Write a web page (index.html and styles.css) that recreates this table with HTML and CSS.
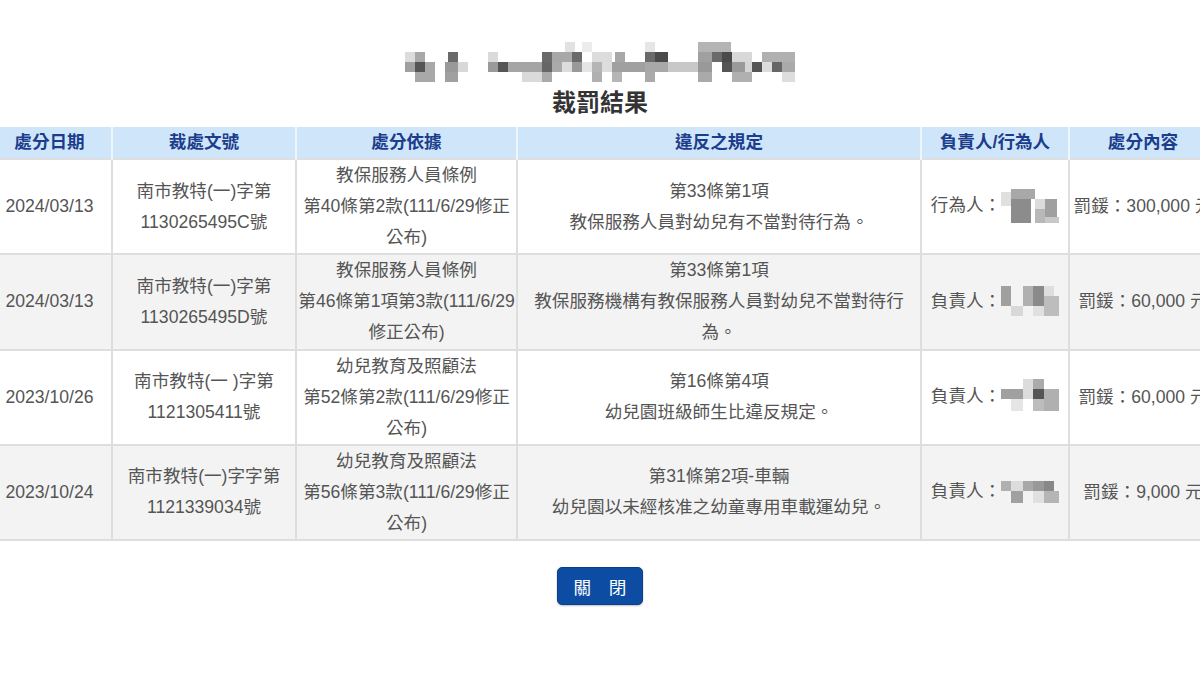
FILE: index.html
```html
<!DOCTYPE html>
<html lang="zh-Hant">
<head>
<meta charset="utf-8">
<title>裁罰結果</title>
<link rel="stylesheet" href="styles.css">
</head>
<body>
<div class="page">
  <header class="head">
    <svg class="blur-title" width="390" height="40" viewBox="0 0 390 40" aria-hidden="true">
      <rect x="160" y="0" width="10" height="10" fill="#e2e2e2"/>
      <rect x="177" y="0" width="10" height="10" fill="#ececec"/>
      <rect x="240" y="0" width="10" height="10" fill="#e6e6e6"/>
      <rect x="293" y="0" width="33" height="10" fill="#b4b4b4"/>
      <rect x="0" y="10" width="10" height="10" fill="#dcdcdc"/>
      <rect x="10" y="10" width="10" height="10" fill="#a8a8a8"/>
      <rect x="43" y="10" width="10" height="10" fill="#6a6a6a"/>
      <rect x="83" y="10" width="10" height="10" fill="#dadada"/>
      <rect x="137" y="10" width="10" height="10" fill="#6a6a6a"/>
      <rect x="147" y="10" width="20" height="10" fill="#a8a8a8"/>
      <rect x="167" y="10" width="10" height="10" fill="#6a6a6a"/>
      <rect x="187" y="10" width="20" height="10" fill="#dcdcdc"/>
      <rect x="210" y="10" width="10" height="10" fill="#a8a8a8"/>
      <rect x="240" y="10" width="10" height="10" fill="#6a6a6a"/>
      <rect x="250" y="10" width="13" height="10" fill="#4a4a4a"/>
      <rect x="293" y="10" width="14" height="10" fill="#a0a0a0"/>
      <rect x="307" y="10" width="10" height="10" fill="#6a6a6a"/>
      <rect x="317" y="10" width="10" height="10" fill="#4a4a4a"/>
      <rect x="327" y="10" width="20" height="10" fill="#d8d8d8"/>
      <rect x="357" y="10" width="33" height="10" fill="#b0b0b0"/>
      <rect x="0" y="20" width="10" height="10" fill="#a0a0a0"/>
      <rect x="10" y="20" width="10" height="10" fill="#555"/>
      <rect x="20" y="20" width="10" height="10" fill="#a8a8a8"/>
      <rect x="40" y="20" width="13" height="10" fill="#999"/>
      <rect x="53" y="20" width="10" height="10" fill="#d8d8d8"/>
      <rect x="83" y="20" width="10" height="10" fill="#9a9a9a"/>
      <rect x="93" y="20" width="10" height="10" fill="#555"/>
      <rect x="103" y="20" width="34" height="10" fill="#a5a5a5"/>
      <rect x="137" y="20" width="10" height="10" fill="#666"/>
      <rect x="147" y="20" width="10" height="10" fill="#aaa"/>
      <rect x="157" y="20" width="10" height="10" fill="#ddd"/>
      <rect x="167" y="20" width="10" height="10" fill="#999"/>
      <rect x="177" y="20" width="10" height="10" fill="#e5e5e5"/>
      <rect x="187" y="20" width="10" height="10" fill="#b5b5b5"/>
      <rect x="197" y="20" width="10" height="10" fill="#ddd"/>
      <rect x="207" y="20" width="33" height="10" fill="#a0a0a0"/>
      <rect x="240" y="20" width="23" height="10" fill="#a8a8a8"/>
      <rect x="263" y="20" width="30" height="10" fill="#c8c8c8"/>
      <rect x="293" y="20" width="14" height="10" fill="#999"/>
      <rect x="317" y="20" width="10" height="10" fill="#555"/>
      <rect x="327" y="20" width="13" height="10" fill="#9a9a9a"/>
      <rect x="340" y="20" width="7" height="10" fill="#d5d5d5"/>
      <rect x="347" y="20" width="10" height="10" fill="#555"/>
      <rect x="357" y="20" width="10" height="10" fill="#ddd"/>
      <rect x="367" y="20" width="10" height="10" fill="#666"/>
      <rect x="377" y="20" width="13" height="10" fill="#aaa"/>
      <rect x="10" y="30" width="20" height="10" fill="#a8a8a8"/>
      <rect x="40" y="30" width="13" height="10" fill="#a0a0a0"/>
      <rect x="117" y="30" width="20" height="10" fill="#dadada"/>
      <rect x="137" y="30" width="10" height="10" fill="#aaa"/>
      <rect x="187" y="30" width="10" height="10" fill="#b0b0b0"/>
      <rect x="207" y="30" width="10" height="10" fill="#b5b5b5"/>
      <rect x="240" y="30" width="10" height="10" fill="#aaa"/>
      <rect x="293" y="30" width="14" height="10" fill="#aaa"/>
      <rect x="327" y="30" width="20" height="10" fill="#b0b0b0"/>
      <rect x="377" y="30" width="13" height="10" fill="#ddd"/>
    </svg>
    <h1 class="title">裁罰結果</h1>
  </header>

  <table class="result">
    <colgroup>
      <col class="c-date">
      <col class="c-doc">
      <col class="c-basis">
      <col class="c-rule">
      <col class="c-person">
      <col class="c-penalty">
    </colgroup>
    <thead>
      <tr>
        <th>處分日期</th>
        <th>裁處文號</th>
        <th>處分依據</th>
        <th>違反之規定</th>
        <th>負責人/行為人</th>
        <th>處分內容</th>
      </tr>
    </thead>
    <tbody>
      <tr class="odd">
        <td>2024/03/13</td>
        <td>南市教特(一)字第<br>1130265495C號</td>
        <td>教保服務人員條例<br>第40條第2款(111/6/29修正<br>公布)</td>
        <td>第33條第1項<br>教保服務人員對幼兒有不當對待行為。</td>
        <td>行為人：<svg class="blur-name" width="58" height="34" viewBox="0 0 58 34" aria-hidden="true"><rect x="0" y="3" width="10" height="14" fill="#e0e0e0"/><rect x="10" y="0" width="24" height="10" fill="#a8a8a8"/><rect x="10" y="10" width="20" height="24" fill="#8c8c8c"/><rect x="34" y="10" width="10" height="10" fill="#dcdcdc"/><rect x="44" y="10" width="12" height="24" fill="#a0a0a0"/><rect x="34" y="20" width="10" height="14" fill="#b8b8b8"/><rect x="44" y="28" width="14" height="6" fill="#c8c8c8"/></svg></td>
        <td>罰鍰：300,000 元</td>
      </tr>
      <tr class="even">
        <td>2024/03/13</td>
        <td>南市教特(一)字第<br>1130265495D號</td>
        <td>教保服務人員條例<br>第46條第1項第3款(111/6/29<br>修正公布)</td>
        <td>第33條第1項<br>教保服務機構有教保服務人員對幼兒不當對待行<br>為。</td>
        <td>負責人：<svg class="blur-name" width="58" height="34" viewBox="0 0 58 34" aria-hidden="true"><rect x="0" y="2" width="10" height="20" fill="#a0a0a0"/><rect x="10" y="22" width="12" height="10" fill="#d8d8d8"/><rect x="22" y="2" width="10" height="20" fill="#b0b0b0"/><rect x="32" y="2" width="11" height="20" fill="#8a8a8a"/><rect x="43" y="2" width="10" height="10" fill="#dedede"/><rect x="43" y="12" width="15" height="20" fill="#bdbdbd"/><rect x="32" y="22" width="11" height="10" fill="#e0e0e0"/></svg></td>
        <td>罰鍰：60,000 元</td>
      </tr>
      <tr class="odd">
        <td>2023/10/26</td>
        <td>南市教特(一 )字第<br>1121305411號</td>
        <td>幼兒教育及照顧法<br>第52條第2款(111/6/29修正<br>公布)</td>
        <td>第16條第4項<br>幼兒園班級師生比違反規定。</td>
        <td>負責人：<svg class="blur-name" width="58" height="34" viewBox="0 0 58 34" aria-hidden="true"><rect x="0" y="10" width="22" height="10" fill="#a0a0a0"/><rect x="22" y="0" width="10" height="20" fill="#dcdcdc"/><rect x="32" y="0" width="11" height="10" fill="#ababab"/><rect x="32" y="10" width="11" height="10" fill="#555"/><rect x="43" y="10" width="15" height="22" fill="#b0b0b0"/><rect x="32" y="20" width="11" height="12" fill="#bdbdbd"/><rect x="10" y="20" width="12" height="12" fill="#e5e5e5"/></svg></td>
        <td>罰鍰：60,000 元</td>
      </tr>
      <tr class="even">
        <td>2023/10/24</td>
        <td>南市教特(一)字字第<br>1121339034號</td>
        <td>幼兒教育及照顧法<br>第56條第3款(111/6/29修正<br>公布)</td>
        <td>第31條第2項-車輛<br>幼兒園以未經核准之幼童專用車載運幼兒。</td>
        <td>負責人：<svg class="blur-name" width="58" height="34" viewBox="0 0 58 34" aria-hidden="true"><rect x="0" y="6" width="10" height="10" fill="#b0b0b0"/><rect x="10" y="6" width="12" height="10" fill="#dcdcdc"/><rect x="10" y="16" width="12" height="12" fill="#a0a0a0"/><rect x="22" y="6" width="10" height="10" fill="#a8a8a8"/><rect x="32" y="6" width="11" height="10" fill="#999"/><rect x="43" y="6" width="10" height="10" fill="#888"/><rect x="43" y="16" width="15" height="12" fill="#b5b5b5"/><rect x="32" y="16" width="11" height="12" fill="#e0e0e0"/></svg></td>
        <td>罰鍰：9,000 元</td>
      </tr>
    </tbody>
  </table>

  <div class="actions">
    <button class="btn-close" type="button">關　閉</button>
  </div>
</div>
</body>
</html>
```

FILE: styles.css
```css
html, body {
  margin: 0;
  padding: 0;
  background: #ffffff;
}

body {
  width: 1200px;
  height: 675px;
  overflow: hidden;
  font-family: "Liberation Sans", "Noto Sans CJK TC", sans-serif;
  color: #555555;
}

.page {
  display: flex;
  flex-direction: column;
  align-items: center;
  padding-top: 42px;
}

.head {
  display: flex;
  flex-direction: column;
  align-items: center;
}

.blur-title {
  display: block;
}

.title {
  margin: 6px 0 0;
  font-size: 24px;
  line-height: 30px;
  font-weight: bold;
  color: #333333;
  font-family: "Liberation Sans", "Noto Sans CJK TC", sans-serif;
}

.result {
  margin-top: 9px;
  align-self: flex-start;
  margin-left: -14px;
  width: 1230px;
  table-layout: fixed;
  border-collapse: collapse;
  font-size: 17.6px;
}

.c-date { width: 125px; }
.c-doc { width: 184px; }
.c-basis { width: 221px; }
.c-rule { width: 404px; }
.c-person { width: 148px; }
.c-penalty { width: 148px; }

.result th {
  background: #cfe6fa;
  color: #1c3d8c;
  font-weight: bold;
  line-height: 31px;
  padding: 0;
  border-left: 2px solid #eef6fd;
  border-right: 2px solid #eef6fd;
  text-align: center;
}

.result td {
  padding: 0;
  line-height: 31.1px;
  text-align: center;
  vertical-align: middle;
  border: 2px solid #dedede;
  white-space: nowrap;
}

.result tr.odd td { background: #ffffff; }
.result tr.even td { background: #f3f3f3; }

.blur-name {
  display: inline-block;
  vertical-align: middle;
  margin-top: -2px;
}

.actions {
  margin-top: 26px;
  display: flex;
  justify-content: center;
}

.btn-close {
  width: 86px;
  height: 38px;
  padding: 0;
  border: 1px solid #0a3f86;
  border-radius: 5px;
  background: #0c4da3;
  color: #ffffff;
  font-family: "Liberation Sans", "Noto Sans CJK TC", sans-serif;
  font-size: 17.6px;
  box-shadow: 0 1px 2px rgba(0, 0, 0, 0.25);
}
```
